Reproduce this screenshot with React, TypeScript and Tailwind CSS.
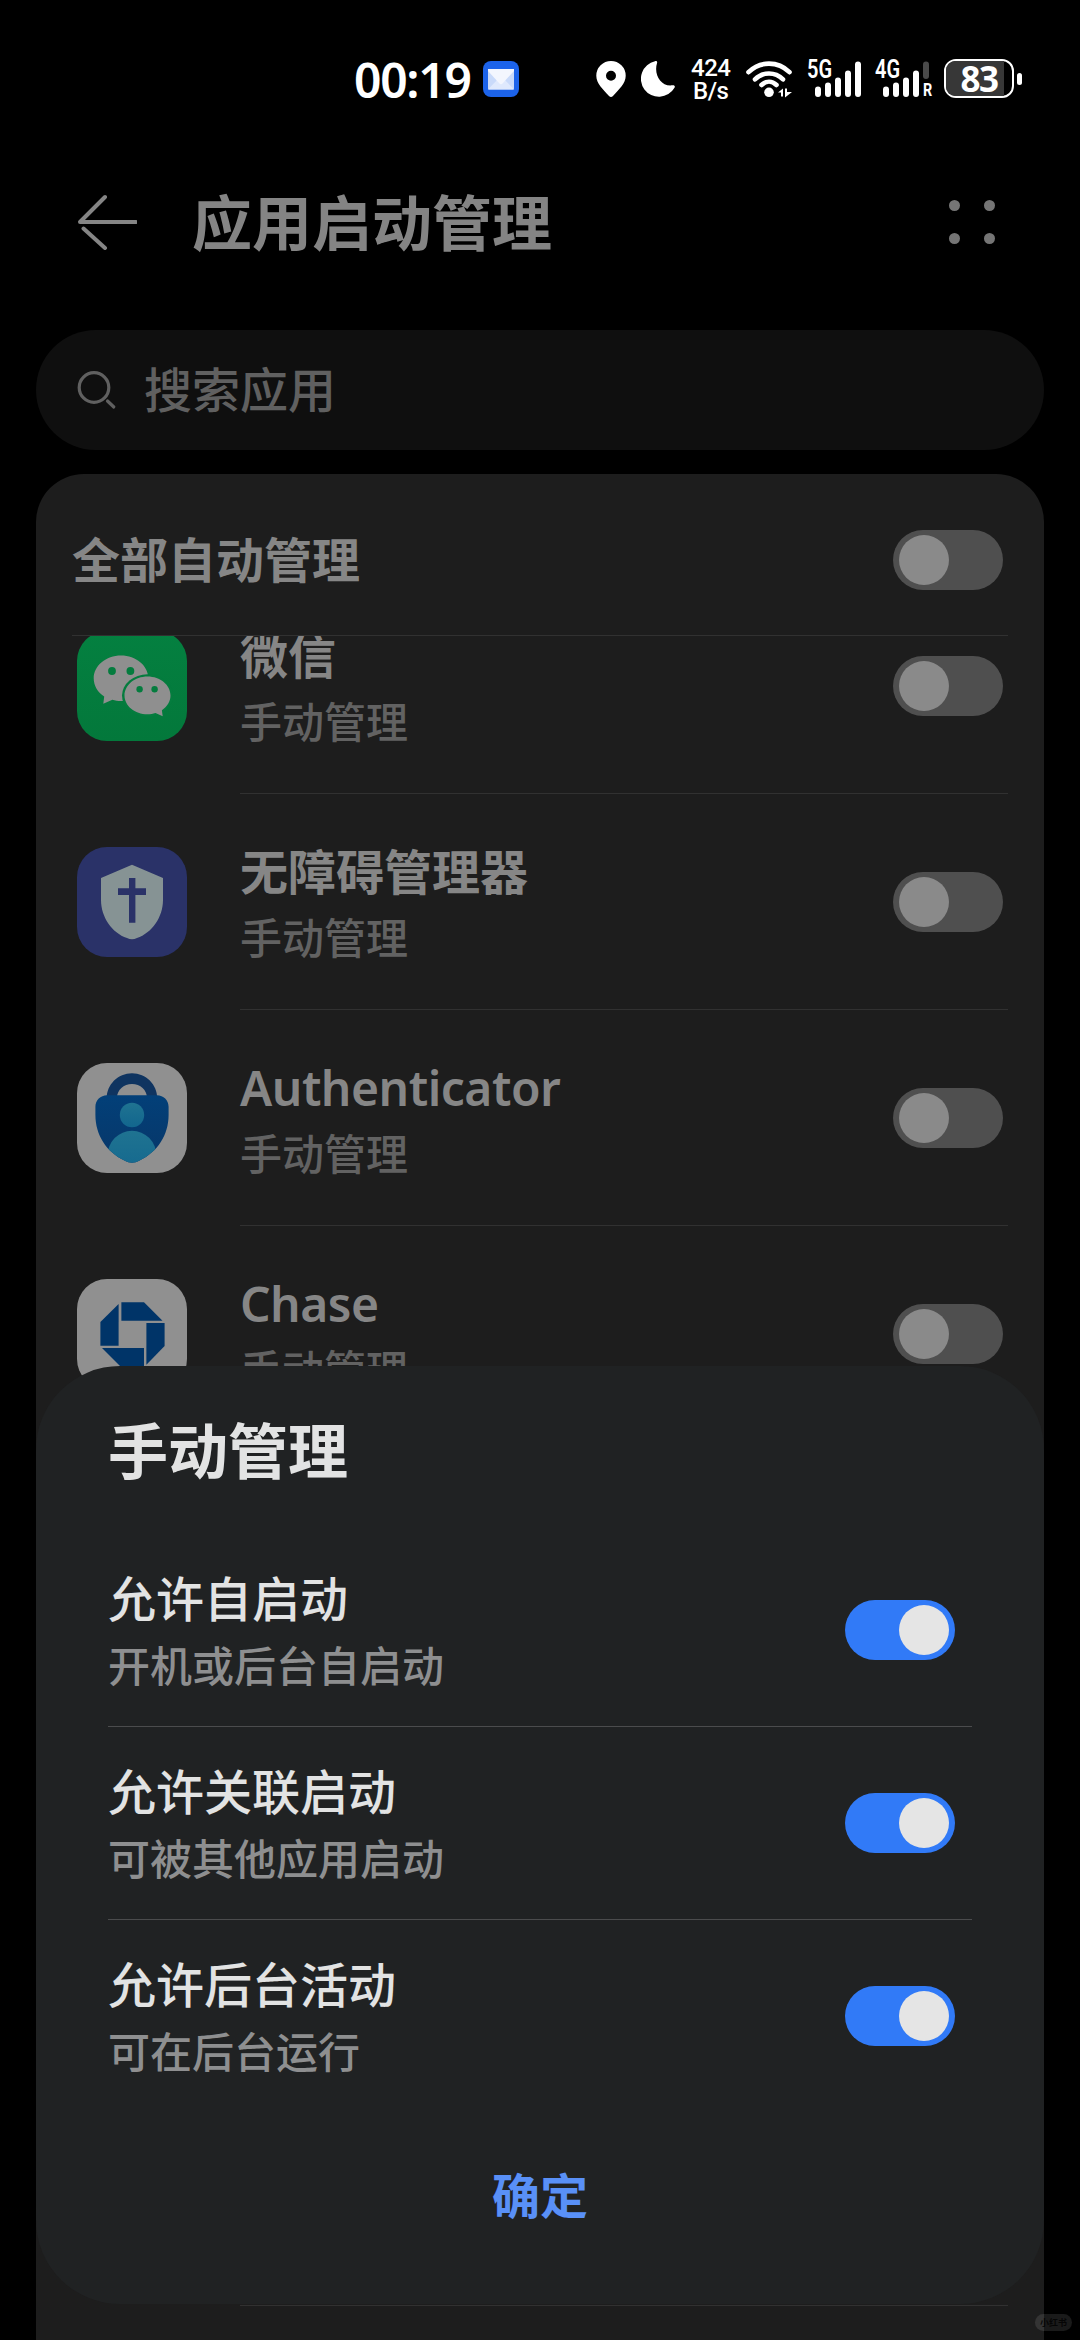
import React from 'react';

interface AppItem {
  id: string;
  name: string;
  icon: React.ReactNode;
}

interface PermissionItem {
  title: string;
  description: string;
}

const WeChatIcon = () => (
  <svg viewBox="0 0 110 110" className="h-full w-full">
    <defs>
      <linearGradient id="wechat" x1="0" y1="0" x2="0" y2="1">
        <stop offset="0" stopColor="#048040" />
        <stop offset="1" stopColor="#03783b" />
      </linearGradient>
    </defs>
    <rect width="110" height="110" fill="url(#wechat)" />
    <path
      d="M44 24.5c15 0 27.3 10.2 27.3 22.7S59 70 44 70c-3 0-6-.5-8.600-1.300L26.300 72.700l.9-7.200C20.800 61.300 16.700 54.800 16.700 47.200 16.700 34.700 29 24.500 44 24.500z"
      fill="#8f8f8f"
    />
    <ellipse cx="70.500" cy="64.500" rx="25.500" ry="21.200" fill="#047c3e" />
    <path
      d="M70.500 45.500c12.700 0 23 8.500 23 19 0 6-3.300 11.200-8.600 14.700l.8 6.100-7.200-3.300c-2.500.7-5.200 1.300-8 1.300-12.700 0-23-8.400-23-18.800s10.300-19 23-19z"
      fill="#8f8f8f"
    />
    <circle cx="35" cy="40" r="3.900" fill="#047c3e" />
    <circle cx="53.400" cy="40" r="3.900" fill="#047c3e" />
    <circle cx="62.600" cy="58.300" r="3.200" fill="#047c3e" />
    <circle cx="77.600" cy="58.300" r="3.200" fill="#047c3e" />
  </svg>
);

const ShieldIcon = () => (
  <svg viewBox="0 0 110 110" className="h-full w-full">
    <rect width="110" height="110" fill="#2a3268" />
    <path
      d="M55 17.700 86 31v22c0 17-11 33-26 38q-5 2.600-10 0C35 86 24 70 24 53V31z"
      fill="#869394"
    />
    <path d="M52 31h6.400v10.300H69V48H58.400v27.700H52V48H41v-6.700h11z" fill="#2a3268" />
  </svg>
);

const AuthenticatorIcon = () => (
  <svg viewBox="0 0 110 110" className="h-full w-full">
    <defs>
      <linearGradient id="authBody" x1="0" y1="0" x2="0" y2="1">
        <stop offset="0" stopColor="#004480" />
        <stop offset="1" stopColor="#083566" />
      </linearGradient>
      <linearGradient id="authUser" x1="0" y1="0" x2="0" y2="1">
        <stop offset="0" stopColor="#1f7391" />
        <stop offset="1" stopColor="#12668e" />
      </linearGradient>
      <clipPath id="authClip">
        <path d="M30 32.300h50c6.500 0 11.600 5 11.600 11.500V52c0 20-11 37-29 45.500-5.500 2.900-9.700 2.900-15.200 0C29.400 89 18.400 72 18.400 52v-8.200c0-6.500 5.100-11.500 11.600-11.500z" />
      </clipPath>
    </defs>
    <rect width="110" height="110" fill="#909090" />
    <path
      d="M29.700 36V35.500c0-14 11.300-25.200 25.300-25.200s25.300 11.200 25.300 25.200V36H70v-1c0-8-6.700-14-15-14s-15 6-15 14v1z"
      fill="#0f3460"
    />
    <g clipPath="url(#authClip)">
      <rect width="110" height="110" fill="url(#authBody)" />
      <ellipse cx="55" cy="93" rx="24.500" ry="25.300" fill="url(#authUser)" />
    </g>
    <circle cx="55" cy="52" r="12.200" fill="url(#authUser)" />
  </svg>
);

const ChaseIcon = () => (
  <svg viewBox="0 0 110 110" className="h-full w-full">
    <rect width="110" height="110" fill="#909090" />
    <g fill="#003468">
      <path d="M44.400 23.300H67l18.500 18.400H44.400z" />
      <path d="M41.600 25v41.700H23.400V43z" />
      <path d="M69.400 44h18.200v23L69.400 85.700z" />
      <path d="M25 69h42v18.400H43.500z" />
    </g>
  </svg>
);

const apps: AppItem[] = [
  { id: 'wechat', name: '微信', icon: <WeChatIcon /> },
  { id: 'accessibility', name: '无障碍管理器', icon: <ShieldIcon /> },
  { id: 'authenticator', name: 'Authenticator', icon: <AuthenticatorIcon /> },
  { id: 'chase', name: 'Chase', icon: <ChaseIcon /> },
];

const permissions: PermissionItem[] = [
  { title: '允许自启动', description: '开机或后台自启动' },
  { title: '允许关联启动', description: '可被其他应用启动' },
  { title: '允许后台活动', description: '可在后台运行' },
];

const isLatin = (text: string) => /^[\x20-\x7e]+$/.test(text);

const Toggle = ({ on = false }: { on?: boolean }) => (
  <button
    role="switch"
    aria-checked={on}
    className={
      on
        ? 'flex h-[60px] w-[110px] shrink-0 items-center justify-end rounded-full bg-[#317af7] px-1.5'
        : 'flex h-[60px] w-[110px] shrink-0 items-center rounded-full bg-[#4f4f4f] px-1.5'
    }
  >
    <span
      className={
        on
          ? 'size-[50px] rounded-full bg-[#e5e5e5]'
          : 'size-[50px] rounded-full bg-[#8a8a8a]'
      }
    />
  </button>
);

const StatusBar = () => (
  <div className="flex h-[158px] items-start pt-[59px] text-white">
    <span className="ml-[354px] w-[129px] text-[48px] leading-[41px] font-semibold tracking-[-1.300px] whitespace-nowrap">
      00:19
    </span>
    {/* Correo */}
    <svg viewBox="0 0 36 36" className="mt-0.5 size-9 shrink-0">
      <rect width="36" height="36" rx="8" fill="#1c63ea" />
      <rect x="5" y="8" width="26" height="20.500" rx="1" fill="#c9dafa" />
      <path d="M5 28.500 14 19h8l9 9.500z" fill="#dfe9fd" />
      <path d="M5 8h26v2L19.500 22.500q-1.500 1.500-3 0L5 10z" fill="#f3f6fe" />
    </svg>
    {/* Ubicación */}
    <svg viewBox="0 0 30 36" className="mt-0.5 ml-[77px] h-9 w-[30px] shrink-0">
      <path
        fill="#fff"
        fillRule="evenodd"
        d="M15 0a14.700 14.700 0 0 1 14.700 14.700c0 8-6.500 13-12.700 20.300q-2 2-4 0C6.800 27.700.3 22.700.3 14.700A14.700 14.700 0 0 1 15 0zm0 9.800a5 5 0 1 0 0 10 5 5 0 0 0 0-10z"
      />
    </svg>
    <svg viewBox="0 0 34 36" className="mt-0.5 ml-[15px] h-9 w-[34px] shrink-0">
      <path
        fill="#fff"
        d="M14 .2c1.500-.4 2.600.5 2 2C12.500 13.500 20 26 31.500 24.300c1.900-.3 2.900.9 2 2.500A18 18 0 1 1 14 .2z"
      />
    </svg>
    <div className="-mt-[2px] ml-4 flex w-[42px] flex-col font-[Roboto] text-[24px] leading-[22.500px] font-medium tracking-[-0.500px]">
      <span>424</span>
      <span className="pl-0.5">B/s</span>
    </div>
    <svg viewBox="0 0 47 37" className="mt-0.5 ml-[13px] h-[37px] w-[47px] shrink-0">
      <g fill="none" stroke="#fff" strokeWidth="4.600" strokeLinecap="round">
        <path d="M2.500 11.200C14-.2 32-.2 43.500 11.200" />
        <path d="M9 18.300C17 10.600 29 10.600 37 18.300" />
        <path d="M15.500 24C20 19.600 26 19.600 30.500 24" />
      </g>
      <circle cx="23" cy="31.300" r="4.800" fill="#fff" />
      <path fill="#fff" d="M32 31.500l5-4v8h-2v-4zM39 27.500h2v3.500h5l-7 5.500z" />
    </svg>
    <div className="relative ml-[14px] h-[38px] w-[56px] shrink-0">
      <span className="absolute top-0 left-0 origin-left scale-x-80 font-[Roboto] text-[25px] leading-[22px] font-semibold">
        5G
      </span>
      <svg viewBox="0 0 56 38" className="h-full w-full">
        <g stroke="#fff" strokeWidth="6" strokeLinecap="round">
          <path d="M11 30.500V35M21 26.500V35M31 21.500V35M41 14.500V35M51 5.500V35" />
        </g>
      </svg>
    </div>
    <div className="relative ml-3 h-[38px] w-[58px] shrink-0">
      <span className="absolute top-0 left-0 origin-left scale-x-80 font-[Roboto] text-[25px] leading-[22px] font-semibold">
        4G
      </span>
      <span className="absolute top-[22px] left-[48px] origin-left scale-x-80 font-[Roboto] text-[18px] leading-[18px] font-bold">
        R
      </span>
      <svg viewBox="0 0 58 38" className="h-full w-full">
        <g stroke="#fff" strokeWidth="6" strokeLinecap="round">
          <path d="M11 30.500V35M21 26.500V35M31 21.500V35M41 14.500V35" />
          <path d="M51 5.500V17" stroke="#4a4a4a" />
        </g>
      </svg>
    </div>
    {/* Batería */}
    <div className="ml-[11px] h-[39px] w-[70px] shrink-0 rounded-[12px] border-[2.500px] border-white bg-black">
      <div className="flex h-full w-[58px] items-center justify-center rounded-l-[9px] bg-[#373737] pl-2 text-[35px] leading-[34px] font-bold">
        <span className="tracking-[-1.500px]">83</span>
      </div>
    </div>
    <div className="mt-3.5 ml-[3px] h-3 w-[5px] rounded-full bg-white" />
  </div>
);

const AppRow = ({ app }: { app?: AppItem }) => (
  <div className="flex h-[216px] shrink-0 items-center pl-[41px]">
    {app && (
      <div className="size-[110px] shrink-0 overflow-hidden rounded-[30px]">
        {app.icon}
      </div>
    )}
    <div
      className={
        app
          ? 'ml-[53px] flex h-full w-[768px] items-center justify-between border-b border-[#313131] pr-[5px]'
          : 'ml-[163px] h-full w-[768px] border-b border-[#313131]'
      }
    >
      {app && (
        <>
          <div className="flex flex-col pt-[7px]">
            <span
              className={
                isLatin(app.name)
                  ? 'text-[48px] leading-[66px] font-semibold tracking-[-0.500px] text-[#868686]'
                  : 'text-[48px] leading-[66px] font-bold text-[#868686]'
              }
            >
              {app.name}
            </span>
            <span className="text-[42px] leading-[66px] font-medium text-[#626262]">
              手动管理
            </span>
          </div>
          <Toggle />
        </>
      )}
    </div>
  </div>
);

const ManualSheet = () => (
  <div className="absolute top-[1366px] left-9 flex h-[938px] w-[1008px] flex-col rounded-[84px] bg-[#202223] px-[72px]">
    <h2 className="mt-[41px] text-[60px] leading-[88px] font-bold text-[#e2e3e3]">
      手动管理
    </h2>
    <div className="mt-[39px] flex flex-col">
      {permissions.map((item, index) => (
        <div
          key={item.title}
          className={
            index < permissions.length - 1
              ? 'flex h-[193px] items-center justify-between border-b border-[#4b4c4d] pr-[17px]'
              : 'flex h-[192px] items-center justify-between pr-[17px]'
          }
        >
          <div className="flex flex-col pt-1">
            <span className="text-[48px] leading-[66px] font-medium text-[#e2e3e3]">
              {item.title}
            </span>
            <span className="text-[42px] leading-[67px] font-medium text-[#8e8f90]">
              {item.description}
            </span>
          </div>
          <Toggle on />
        </div>
      ))}
    </div>
    <button className="mt-[51px] self-center text-[48px] leading-[66px] font-bold text-[#5990f7]">
      确定
    </button>
  </div>
);

const App: React.FC = () => {
  return (
    <div
      lang="zh-CN"
      className="relative flex h-[2340px] w-[1080px] flex-col overflow-hidden bg-black font-['Noto_Sans','Noto_Sans_CJK_SC',sans-serif]"
    >
      <StatusBar />

      {/* Cabecera */}
      <div className="flex h-[128px] items-center pr-[85px] pl-[77px]">
        <svg viewBox="0 0 60 56" className="h-14 w-[60px]">
          <g fill="none" stroke="#858585" strokeWidth="4" strokeLinecap="round">
            <path d="M59 28H3L28 3" strokeLinejoin="round" />
            <path d="M6.500 34.500 28 54" />
          </g>
        </svg>
        <h1 className="ml-[55px] flex-1 pt-0.5 text-[60px] leading-[88px] font-bold text-[#848484]">
          应用启动管理
        </h1>
        <div className="grid grid-cols-2 gap-x-6 gap-y-[22px]">
          <span className="size-[11px] rounded-full bg-[#757575]" />
          <span className="size-[11px] rounded-full bg-[#757575]" />
          <span className="size-[11px] rounded-full bg-[#757575]" />
          <span className="size-[11px] rounded-full bg-[#757575]" />
        </div>
      </div>

      {/* Buscador */}
      <div className="mx-9 mt-11 flex h-[120px] shrink-0 items-center rounded-full bg-[#0f0f0f] pl-[41px]">
        <svg viewBox="0 0 40 40" className="size-10">
          <g fill="none" stroke="#606060" strokeWidth="3.200" strokeLinecap="round">
            <circle cx="17" cy="17.500" r="14.800" />
            <path d="M30.500 31 36.800 37" />
          </g>
        </svg>
        <span className="ml-[27px] text-[48px] leading-[66px] font-medium text-[#606060]">
          搜索应用
        </span>
      </div>

      <div className="mx-9 mt-6 flex min-h-0 flex-1 flex-col rounded-t-[48px] bg-[#1d1d1d]">
        <div className="mx-9 flex h-[162px] shrink-0 items-center justify-between border-b border-[#313131] pt-[11px] pr-[5px]">
          <span className="text-[48px] leading-[66px] font-bold text-[#868686]">
            全部自动管理
          </span>
          <Toggle />
        </div>
        <div className="min-h-0 flex-1 overflow-hidden">
          <div className="-mt-[58px] flex flex-col">
            {apps.map((app) => (
              <AppRow key={app.id} app={app} />
            ))}
            <AppRow />
            <AppRow />
            <AppRow />
            <AppRow />
          </div>
        </div>
      </div>

      <ManualSheet />

      <div className="absolute right-2 bottom-[9px] h-[17px] w-[37px] rounded-full bg-white/10 text-center text-[9px] leading-[17px] font-bold text-black/80">
        小红书
      </div>
    </div>
  );
};

export default App;
